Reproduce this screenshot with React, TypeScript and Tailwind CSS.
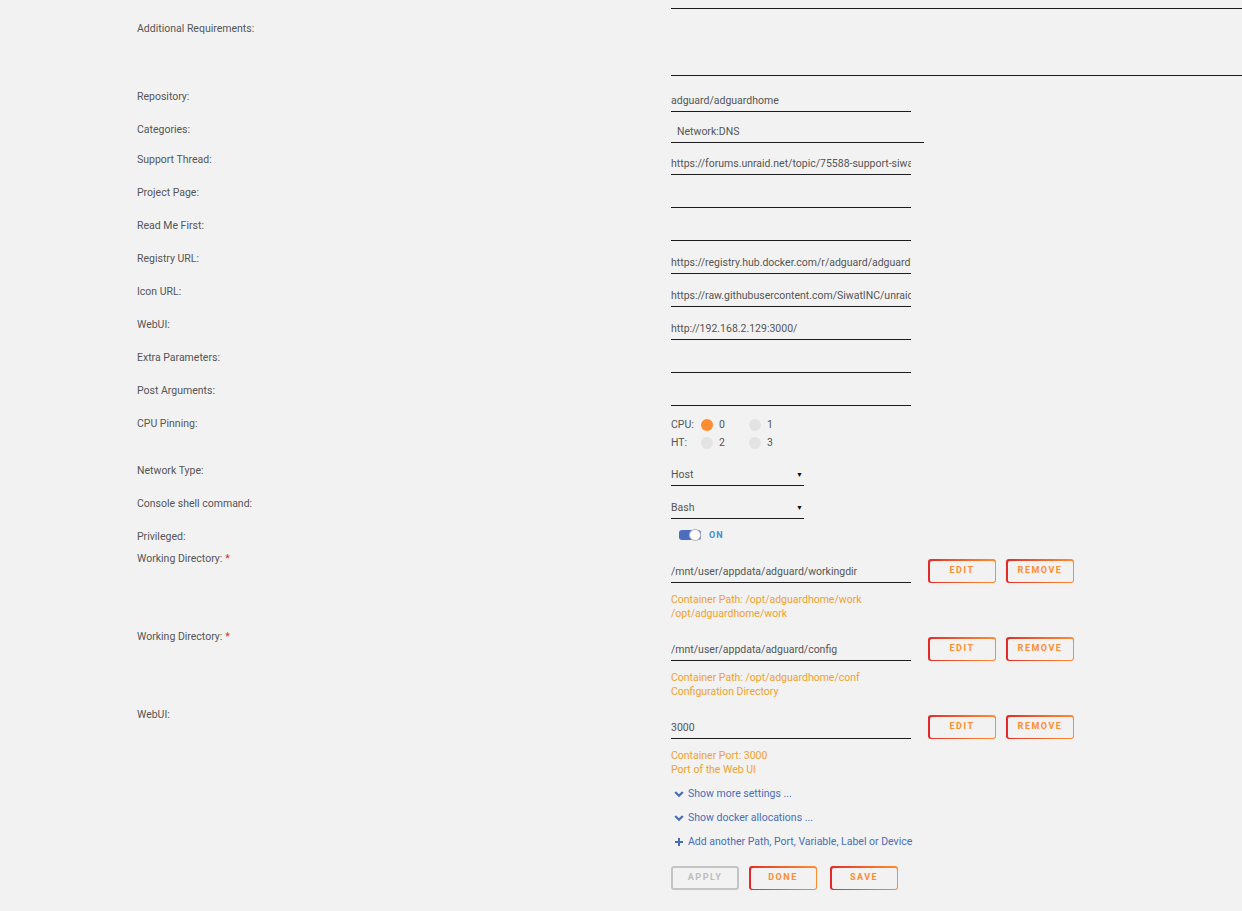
import React from "react";

const font = "font-['Roboto','Liberation_Sans',sans-serif]";
const labelCls = "w-[671px] shrink-0 pl-[137px] pt-[1px] text-[10.5px] leading-4 text-[#555]";
const inputCls =
  "overflow-hidden whitespace-nowrap border-b border-[#1c1c1c] pt-[5px] pb-[2px] text-[10.5px] leading-4 text-[#555]";

function Label(props: { text: string; required?: boolean }) {
  return (
    <div className={labelCls}>
      {props.text}
      {props.required && <span className="ml-[3px] text-[#e22828]">*</span>}
    </div>
  );
}

function Field(props: { label: string; value?: string; width?: string }) {
  return (
    <div className="mb-[9px] flex">
      <Label text={props.label} />
      <div className={`${inputCls} ${props.width ?? "w-[240px]"}`}>
        {props.value ?? "\u00a0"}
      </div>
    </div>
  );
}

function GradButton(props: { text: string; disabled?: boolean; className?: string }) {
  if (props.disabled)
    return (
      <div
        className={`flex h-[24px] w-[68px] items-center justify-center rounded-[3px] border-2 border-[#c4c4c4] text-[9px] font-bold tracking-[1.5px] text-[#bdbdbd] ${props.className ?? ""}`}
      >
        {props.text}
      </div>
    );

  return (
    <div
      className={`h-[24px] w-[68px] rounded-[3px] bg-gradient-to-r from-[#e22828] to-[#ff8c2f] p-[1.5px] ${props.className ?? ""}`}
    >
      <div className="flex h-full w-full items-center justify-center rounded-[2px] bg-[#f2f2f2] text-[9px] font-bold tracking-[1.5px] text-[#ff8c2f]">
        {props.text}
      </div>
    </div>
  );
}

function PathBlock(props: { label: string; value: string; lines: string[] }) {
  return (
    <div className="mb-[7px] flex">
      <Label text={props.label} required={props.label.startsWith("Working")} />
      <div className="pt-[9px]">
        <div className="flex items-start">
          <div className={`${inputCls} w-[240px]`}>{props.value}</div>
          <GradButton text="EDIT" className="ml-[17px]" />
          <GradButton text="REMOVE" className="ml-[10px]" />
        </div>
        <div className="mt-[9px] pt-[1px] text-[10.5px] leading-[14px] text-[#f0a12c]">
          {props.lines.map((l) => (
            <div key={l}>{l}</div>
          ))}
        </div>
      </div>
    </div>
  );
}

function Dot(props: { on?: boolean; n: string }) {
  return (
    <div className="flex w-[48px] items-center">
      <span
        className={`h-[12px] w-[12px] rounded-full ${props.on ? "bg-[#ff8c2f]" : "bg-[#e3e3e3]"}`}
      />
      <span className="ml-[6px] text-[10.5px] text-[#555]">{props.n}</span>
    </div>
  );
}

function Select(props: { label: string; value: string }) {
  return (
    <div className="mb-[9px] flex">
      <Label text={props.label} />
      <div className={`${inputCls} flex w-[133px] justify-between`}>
        <span>{props.value}</span>
        <span className="mr-[1px] text-[7px] text-[#111]">▼</span>
      </div>
    </div>
  );
}

function Chevron() {
  return (
    <svg width={10} height={10} viewBox="0 0 10 10" aria-hidden>
      <path d="M1.2 3 5 6.8 8.8 3" fill="none" stroke="#486dba" strokeWidth={2.2} />
    </svg>
  );
}

function Plus() {
  return (
    <svg width={10} height={10} viewBox="0 0 10 10" aria-hidden>
      <path d="M5 1v8M1 5h8" fill="none" stroke="#486dba" strokeWidth={2} />
    </svg>
  );
}

export default function App() {
  return (
    <div className={`h-[911px] w-full overflow-hidden bg-[#f2f2f2] ${font}`}>
      <div className="ml-[671px] h-[9px] border-b border-[#1c1c1c]" />

      <div className="mt-[11px] mb-[12px] flex">
        <Label text="Additional Requirements:" />
        <div className="h-[56px] flex-1 border-b border-[#1c1c1c]" />
      </div>

      <Field label="Repository:" value="adguard/adguardhome" />

      <div className="mb-[8px] flex">
        <Label text="Categories:" />
        <div className={`${inputCls} w-[253px] !pt-[3px] !pb-[2px] pl-[6px]`}>Network:DNS</div>
      </div>

      <Field
        label="Support Thread:"
        value="https://forums.unraid.net/topic/75588-support-siwatinc-adguard-home/"
      />
      <Field label="Project Page:" />
      <Field label="Read Me First:" />
      <Field
        label="Registry URL:"
        value="https://registry.hub.docker.com/r/adguard/adguardhome/"
      />
      <Field
        label="Icon URL:"
        value="https://raw.githubusercontent.com/SiwatINC/unraid-ca-repository/master/icons/adguard.png"
      />
      <Field label="WebUI:" value="http://192.168.2.129:3000/" />
      <Field label="Extra Parameters:" />
      <Field label="Post Arguments:" />

      <div className="mb-[10px] flex">
        <Label text="CPU Pinning:" />
        <div className="pt-[1px] text-[10.5px] leading-[18px] text-[#555]">
          <div className="flex items-center">
            <span className="w-[30px]">CPU:</span>
            <Dot on n="0" />
            <Dot n="1" />
          </div>
          <div className="flex items-center">
            <span className="w-[30px]">HT:</span>
            <Dot n="2" />
            <Dot n="3" />
          </div>
        </div>
      </div>

      <Select label="Network Type:" value="Host" />
      <Select label="Console shell command:" value="Bash" />

      <div className="flex h-[22px]">
        <Label text="Privileged:" />
        <div className="flex items-start pt-[2px]">
          <div className="relative ml-[8px] h-[10px] w-[22px] rounded-[3px] bg-[#4a6fc0]">
            <span className="absolute top-[-1px] right-0 h-[12px] w-[12px] rounded-full border border-[#b5b5b5] bg-white" />
          </div>
          <span className="ml-[8px] text-[9px] leading-[10px] font-bold tracking-[1px] text-[#3d8fd6]">
            ON
          </span>
        </div>
      </div>

      <PathBlock
        label="Working Directory:"
        value="/mnt/user/appdata/adguard/workingdir"
        lines={["Container Path: /opt/adguardhome/work", "/opt/adguardhome/work"]}
      />
      <PathBlock
        label="Working Directory:"
        value="/mnt/user/appdata/adguard/config"
        lines={["Container Path: /opt/adguardhome/conf", "Configuration Directory"]}
      />
      <PathBlock
        label="WebUI:"
        value="3000"
        lines={["Container Port: 3000", "Port of the Web UI"]}
      />

      <div className="ml-[671px] mt-[-2px] text-[10.5px] text-[#486dba]">
        <div className="flex h-[24px] items-center gap-[4px] pl-[3px]">
          <Chevron />
          Show more settings ...
        </div>
        <div className="flex h-[24px] items-center gap-[4px] pl-[3px]">
          <Chevron />
          Show docker allocations ...
        </div>
        <div className="flex h-[24px] items-center gap-[4px] pl-[3px]">
          <Plus />
          Add another Path, Port, Variable, Label or Device
        </div>
        <div className="mt-[12px] flex">
          <GradButton text="APPLY" disabled />
          <GradButton text="DONE" className="ml-[10px]" />
          <GradButton text="SAVE" className="ml-[13px]" />
        </div>
      </div>
    </div>
  );
}
